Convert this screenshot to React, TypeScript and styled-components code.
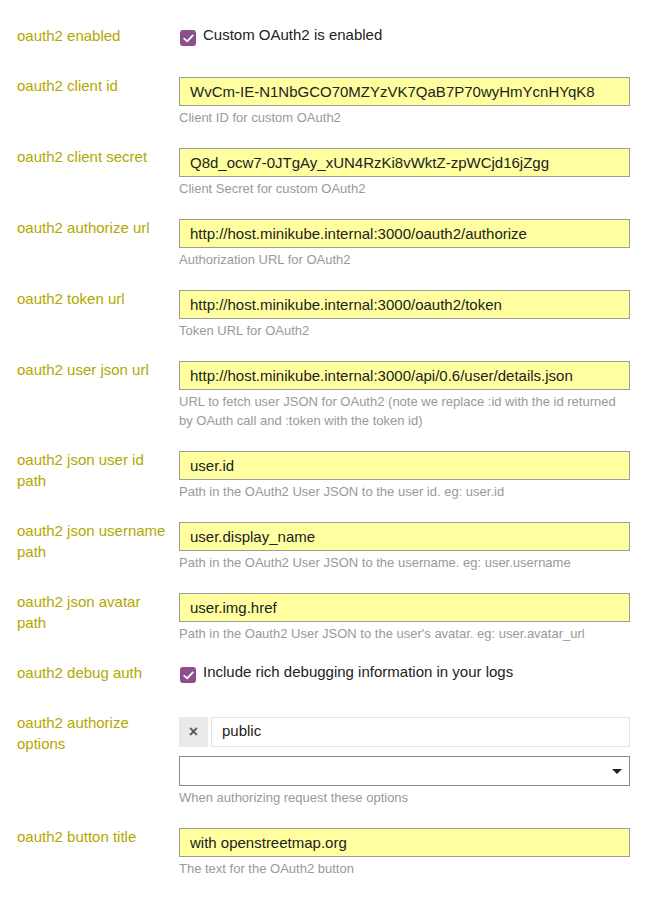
import React from "react"
import styled, { createGlobalStyle } from "styled-components"

const GlobalStyle = createGlobalStyle`
  body {
    margin: 0;
    background: #fff;
    font-family: "Liberation Sans", Arial, sans-serif;
  }
`

type Field =
  | { kind: "text"; label: string; value: string; desc: string }
  | { kind: "check"; label: string; text: string }
  | { kind: "list"; label: string; tags: string[]; desc: string }

const fields: Field[] = [
  { kind: "check", label: "oauth2 enabled", text: "Custom OAuth2 is enabled" },
  {
    kind: "text",
    label: "oauth2 client id",
    value: "WvCm-IE-N1NbGCO70MZYzVK7QaB7P70wyHmYcnHYqK8",
    desc: "Client ID for custom OAuth2",
  },
  {
    kind: "text",
    label: "oauth2 client secret",
    value: "Q8d_ocw7-0JTgAy_xUN4RzKi8vWktZ-zpWCjd16jZgg",
    desc: "Client Secret for custom OAuth2",
  },
  {
    kind: "text",
    label: "oauth2 authorize url",
    value: "http://host.minikube.internal:3000/oauth2/authorize",
    desc: "Authorization URL for OAuth2",
  },
  {
    kind: "text",
    label: "oauth2 token url",
    value: "http://host.minikube.internal:3000/oauth2/token",
    desc: "Token URL for OAuth2",
  },
  {
    kind: "text",
    label: "oauth2 user json url",
    value: "http://host.minikube.internal:3000/api/0.6/user/details.json",
    desc: "URL to fetch user JSON for OAuth2 (note we replace :id with the id returned by OAuth call and :token with the token id)",
  },
  {
    kind: "text",
    label: "oauth2 json user id path",
    value: "user.id",
    desc: "Path in the OAuth2 User JSON to the user id. eg: user.id",
  },
  {
    kind: "text",
    label: "oauth2 json username path",
    value: "user.display_name",
    desc: "Path in the OAuth2 User JSON to the username. eg: user.username",
  },
  {
    kind: "text",
    label: "oauth2 json avatar path",
    value: "user.img.href",
    desc: "Path in the Oauth2 User JSON to the user's avatar. eg: user.avatar_url",
  },
  { kind: "check", label: "oauth2 debug auth", text: "Include rich debugging information in your logs" },
  {
    kind: "list",
    label: "oauth2 authorize options",
    tags: ["public"],
    desc: "When authorizing request these options",
  },
  {
    kind: "text",
    label: "oauth2 button title",
    value: "with openstreetmap.org",
    desc: "The text for the OAuth2 button",
  },
]

const Page = styled.div`
  padding: 25px 15px 0 17px;
  width: 645px;
  box-sizing: border-box;
`

const Row = styled.div`
  display: grid;
  grid-template-columns: 155px 1fr;
  column-gap: 7px;
  padding-bottom: 19px;
`

const Label = styled.div`
  color: #b3a700;
  font-size: 15px;
  line-height: 21px;
`

const Control = styled.div`
  display: flex;
  flex-direction: column;
  min-width: 0;
`

const TextInput = styled.div`
  margin-top: 2px;
  height: 29px;
  box-sizing: border-box;
  border: 1px solid #9c9c9c;
  background: #ffffa0;
  padding: 0 10px 1px;
  display: flex;
  align-items: center;
  font-size: 15px;
  color: #222;
  white-space: nowrap;
  overflow: hidden;
`

const Desc = styled.div`
  margin-top: 2px;
  font-size: 13px;
  line-height: 19px;
  color: #999;
`

const CheckLine = styled.label`
  display: flex;
  align-items: flex-start;
  min-height: 31px;
  font-size: 15px;
  line-height: 21px;
  color: #222;
`

const Box = styled.span`
  flex: none;
  width: 16px;
  height: 16px;
  margin: 5px 7px 0 1px;
  border-radius: 3px;
  background: #8e4d8b;
  display: flex;
  align-items: center;
  justify-content: center;
`

const CheckText = styled.span`
  margin-top: -1px;
`

const TagRow = styled.div`
  display: flex;
  gap: 3px;
  margin-top: 5px;
  height: 30px;
`

const TagRemove = styled.span`
  width: 29px;
  flex: none;
  background: #e9e9e9;
  color: #555;
  font-size: 16px;
  font-weight: bold;
  display: flex;
  align-items: center;
  justify-content: center;
`

const TagValue = styled.span`
  flex: 1;
  border: 1px solid #e4e4e4;
  box-sizing: border-box;
  padding: 0 10px 3px;
  display: flex;
  align-items: center;
  font-size: 15px;
  color: #222;
`

const Select = styled.div`
  margin-top: 9px;
  height: 30px;
  box-sizing: border-box;
  border: 1px solid #8a8a8a;
  display: flex;
  align-items: center;
  justify-content: flex-end;
  padding-right: 7px;
`

const Caret = styled.span`
  width: 0;
  height: 0;
  border-left: 5px solid transparent;
  border-right: 5px solid transparent;
  border-top: 5px solid #222;
`

const Check = () => (
  <svg width="11" height="9" viewBox="0 0 11 9">
    <path d="M1.2 4.6 L4.2 7.4 L9.8 1.4" fill="none" stroke="#fff" strokeWidth="1.8" strokeLinecap="round" strokeLinejoin="round" />
  </svg>
)

const App: React.FC = () => {
  return (
    <>
      <GlobalStyle />
      <Page>
        {fields.map((f) => (
          <Row key={f.label}>
            <Label>{f.label}</Label>
            <Control>
              {f.kind === "check" && (
                <CheckLine>
                  <Box>
                    <Check />
                  </Box>
                  <CheckText>{f.text}</CheckText>
                </CheckLine>
              )}
              {f.kind === "text" && (
                <>
                  <TextInput>{f.value}</TextInput>
                  <Desc>{f.desc}</Desc>
                </>
              )}
              {f.kind === "list" && (
                <>
                  {f.tags.map((t) => (
                    <TagRow key={t}>
                      <TagRemove>×</TagRemove>
                      <TagValue>{t}</TagValue>
                    </TagRow>
                  ))}
                  <Select>
                    <Caret />
                  </Select>
                  <Desc>{f.desc}</Desc>
                </>
              )}
            </Control>
          </Row>
        ))}
      </Page>
    </>
  )
}

export default App
